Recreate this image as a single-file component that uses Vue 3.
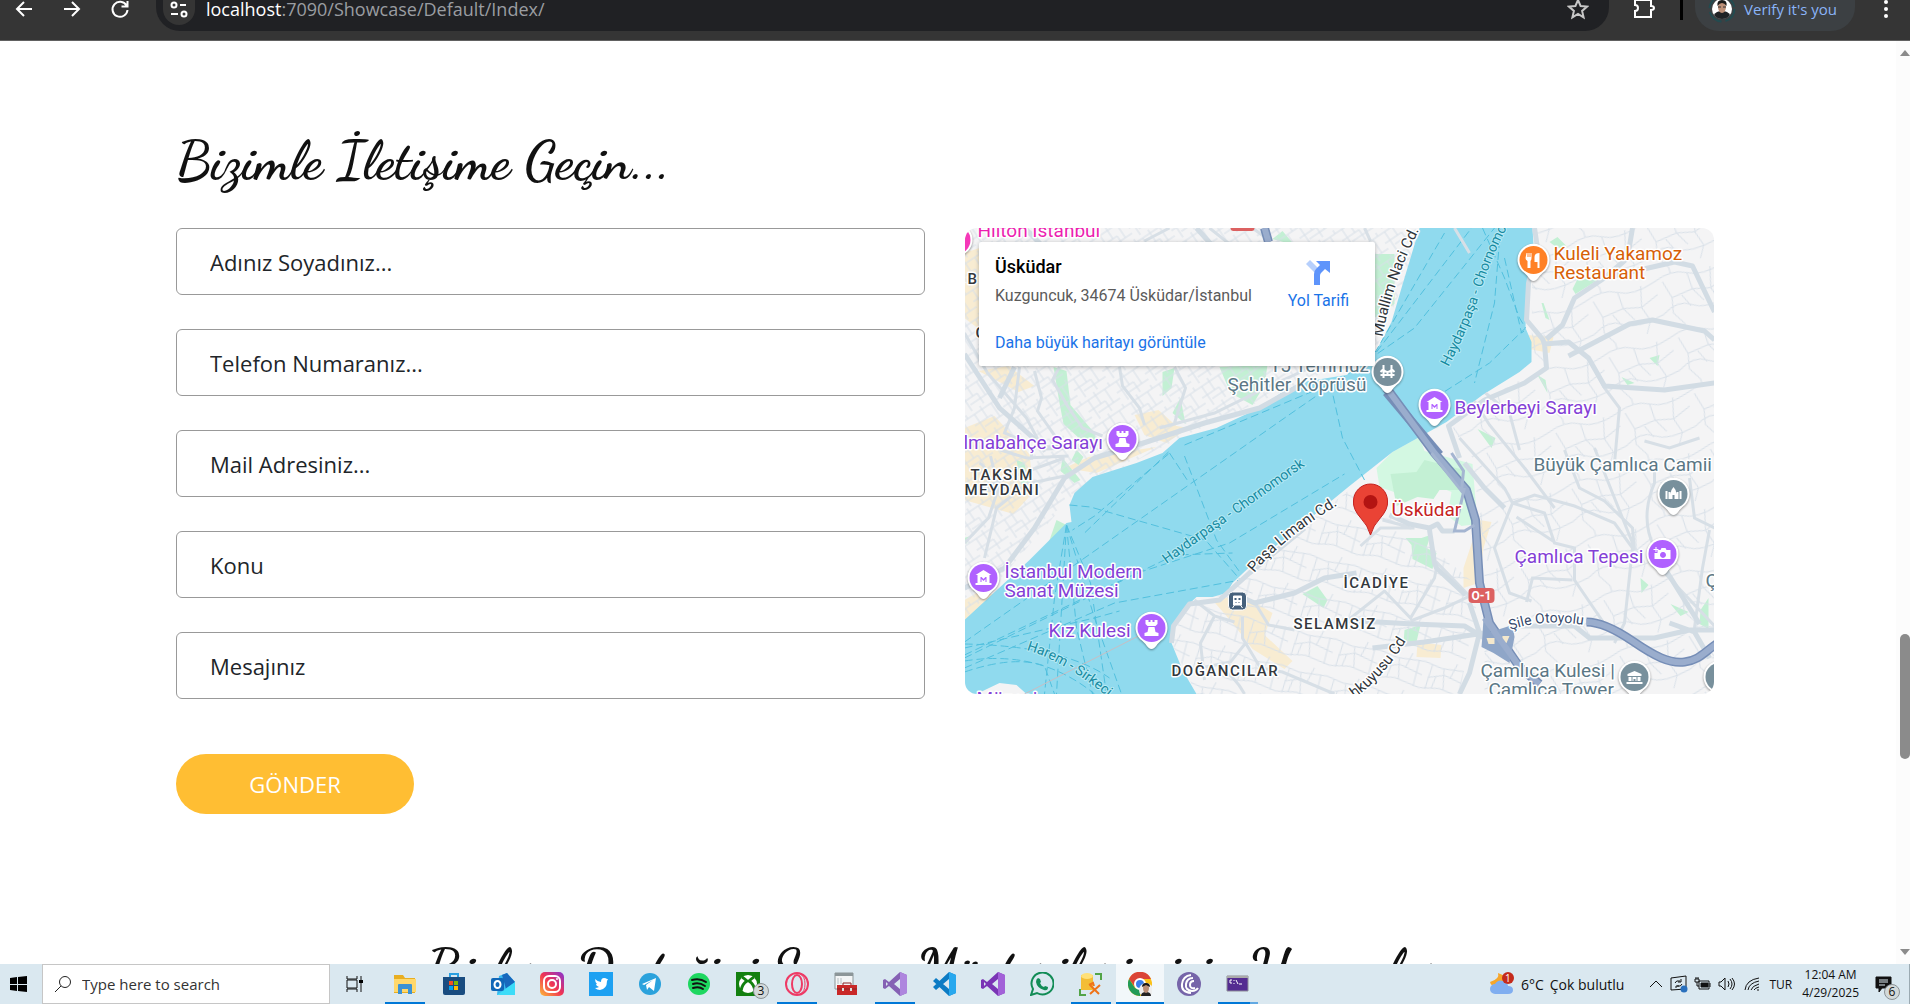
<script setup>
import { ref } from 'vue'

const fields = [
  { id: 'name', type: 'text', label: 'Adınız Soyadınız...' },
  { id: 'phone', type: 'tel', label: 'Telefon Numaranız...' },
  { id: 'mail', type: 'email', label: 'Mail Adresiniz...' },
  { id: 'subject', type: 'text', label: 'Konu' },
  { id: 'message', type: 'text', label: 'Mesajınız' },
]
const form = ref({ name: '', phone: '', mail: '', subject: '', message: '' })

const pins = [
  { x: -8, y: 12, color: '#f538b8', kind: 'dot' },
  { x: 158, y: 211, color: '#b061ff', kind: 'tower' },
  { x: 187, y: 400, color: '#b061ff', kind: 'tower' },
  { x: 19, y: 350, color: '#b061ff', kind: 'museum' },
  { x: 470, y: 177, color: '#b061ff', kind: 'museum' },
  { x: 423, y: 144, color: '#78909c', kind: 'bridge' },
  { x: 569, y: 32, color: '#ff8126', kind: 'food' },
  { x: 709, y: 266, color: '#78909c', kind: 'mosque' },
  { x: 698, y: 326, color: '#b061ff', kind: 'camera' },
  { x: 670, y: 449, color: '#78909c', kind: 'bank' },
  { x: 755, y: 449, color: '#78909c', kind: 'dot' },
]

const labels = [
  { x: 13, y: 9, t: 'Hilton İstanbul', c: 'pink' },
  { x: 3, y: 56, t: 'B', c: 'area' },
  { x: 11, y: 110, t: 'G', c: 'area' },
  { x: 305, y: 144, t: '15 Temmuz', c: 'slate' },
  { x: 263, y: 163, t: 'Şehitler Köprüsü', c: 'slate' },
  { x: -1, y: 221, t: 'lmabahçe Sarayı', c: 'violet' },
  { x: 6, y: 252, t: 'TAKSİM', c: 'area' },
  { x: 0, y: 267, t: 'MEYDANI', c: 'area' },
  { x: 40, y: 350, t: 'İstanbul Modern', c: 'violet' },
  { x: 40, y: 369, t: 'Sanat Müzesi', c: 'violet' },
  { x: 84, y: 409, t: 'Kız Kulesi', c: 'violet' },
  { x: 12, y: 477, t: 'Müzesi', c: 'violet' },
  { x: 207, y: 448, t: 'DOĞANCILAR', c: 'area' },
  { x: 379, y: 360, t: 'İCADİYE', c: 'area' },
  { x: 329, y: 401, t: 'SELAMSIZ', c: 'area' },
  { x: 427, y: 288, t: 'Üsküdar', c: 'red' },
  { x: 550, y: 335, t: 'Çamlıca Tepesi', c: 'violet' },
  { x: 569, y: 243, t: 'Büyük Çamlıca Camii', c: 'slate' },
  { x: 516, y: 449, t: 'Çamlıca Kulesi |', c: 'slate' },
  { x: 524, y: 468, t: 'Çamlıca Tower', c: 'slate' },
  { x: 741, y: 359, t: 'Ç', c: 'slate' },
  { x: 589, y: 32, t: 'Kuleli Yakamoz', c: 'orange' },
  { x: 589, y: 51, t: 'Restaurant', c: 'orange' },
  { x: 490, y: 186, t: 'Beylerbeyi Sarayı', c: 'violet' },
]

const curved = [
  { id: 'c1', d: 'M202 336L350 231', t: 'Haydarpaşa - Chornomorsk', c: 'sea' },
  { id: 'c2', d: 'M484 139Q506 97 518 57Q530 22 545 -5L565 -50', t: 'Haydarpaşa - Chornomorsk', c: 'sea' },
  { id: 'c3', d: 'M62 422Q104 434 156 480', t: 'Harem - Sirkeci', c: 'sea' },
  { id: 'c4', d: 'M418 109Q428 50 462 -12', t: 'Muallim Naci Cd.', c: 'road' },
  { id: 'c5', d: 'M290 345Q320 308 382 272', t: 'Paşa Limanı Cd.', c: 'road' },
  { id: 'c6', d: 'M390 470Q424 446 449 400', t: 'hkuyusu Cd', c: 'road' },
  { id: 'c7', d: 'M546 402Q584 388 634 400', t: 'Şile Otoyolu', c: 'motorway' },
]

const apps = [
  { n: 'File Explorer', k: 'explorer', open: true },
  { n: 'Microsoft Store', k: 'store' },
  { n: 'Outlook', k: 'outlook' },
  { n: 'Instagram', k: 'instagram' },
  { n: 'Twitter', k: 'twitter' },
  { n: 'Telegram', k: 'telegram' },
  { n: 'Spotify', k: 'spotify' },
  { n: 'Xbox', k: 'xbox' },
  { n: 'Opera GX', k: 'opera', open: true },
  { n: 'Toolbox', k: 'toolbox' },
  { n: 'Visual Studio 2022', k: 'vs', open: true },
  { n: 'Visual Studio Code', k: 'vscode' },
  { n: 'Visual Studio', k: 'vs2' },
  { n: 'WhatsApp', k: 'whatsapp' },
  { n: 'SQL Server Management Studio', k: 'ssms', open: true },
  { n: 'Chrome', k: 'chrome', open: true, active: true },
  { n: 'BitTorrent', k: 'bittorrent' },
  { n: 'Command Prompt', k: 'cmd', open: true, multi: true },
]
</script>

<template>
  <div class="screen">
    <header class="toolbar">
      <button class="nav" aria-label="Back"><svg width="20" height="20" viewBox="0 0 20 20"><path d="M18 10H3M10 3l-7 7 7 7" /></svg></button>
      <button class="nav" aria-label="Forward"><svg width="20" height="20" viewBox="0 0 20 20"><path d="M2 10h15M10 3l7 7-7 7" /></svg></button>
      <button class="nav" aria-label="Reload"><svg width="20" height="20" viewBox="0 0 20 20"><path d="M16.500 6.500A7.500 7.500 0 1 0 17.500 11M17.500 2v5.500h-6" /></svg></button>
      <div class="omnibox">
        <button class="site" aria-label="Site information"><svg width="20" height="20" viewBox="0 0 20 20"><circle cx="5" cy="5" r="2.500" /><path d="M11 5h6M2 14h7" /><circle cx="15" cy="14" r="2.500" /></svg></button>
        <span class="url"><b>localhost</b>:7090/Showcase/Default/Index/</span>
        <button class="star" aria-label="Bookmark"><svg width="22" height="22" viewBox="0 0 22 22"><path d="M11 2l2.600 6 6.400.6-4.900 4.300 1.500 6.400-5.600-3.400-5.600 3.400 1.500-6.400L2 8.600 8.400 8z" /></svg></button>
      </div>
      <button class="ext" aria-label="Extensions"><svg width="24" height="24" viewBox="0 0 24 24"><path d="M3 3h16v6q3 0 3 2t-3 2v7H3v-6q3 0 3-3t-3-3z" /></svg></button>
      <span class="divider"></span>
      <button class="profile">
        <svg width="28" height="28" viewBox="0 0 28 28"><circle cx="14" cy="14" r="12.500" fill="none" stroke="#224b50" stroke-width="2" stroke-dasharray="16 4" /><circle cx="14" cy="14" r="10" fill="#fff" /><path d="M6 20q2-4 8-4t8 4q-3 4-8 4t-8-4" fill="#202326" /><ellipse cx="14" cy="12" rx="4" ry="6" fill="#bd9078" /><path d="M9.500 11q-1-6 4.500-6t4.500 6q-2-3-4.500-3t-4.500 3" fill="#191919" /><path d="M10 12h3m2 0h3" stroke="#333" /></svg>
        Verify it's you
      </button>
      <button class="more" aria-label="Menu"><svg width="6" height="22" viewBox="0 0 6 22"><circle cx="3" cy="4" r="2" /><circle cx="3" cy="11" r="2" /><circle cx="3" cy="18" r="2" /></svg></button>
    </header>

    <div class="viewport">
      <main class="page">
        <section class="contact">
          <h2>Bizimle İletişime Geçin...</h2>
          <div class="columns">
            <form @submit.prevent>
              <input v-for="f in fields" :key="f.id" v-model="form[f.id]" :type="f.type" :name="f.id" :placeholder="f.label" :aria-label="f.label" />
              <button class="send" type="submit">GÖNDER</button>
            </form>
            <div class="map">
              <svg class="canvas" viewBox="0 0 750 466" preserveAspectRatio="xMidYMid slice" aria-label="Üsküdar">
                <defs>
                  <pattern id="gridA" width="34" height="26" patternUnits="userSpaceOnUse" patternTransform="rotate(-34)"><path d="M0 4h34M0 14h20M8 20h26M6 4v22M15 0v14M26 4v16M20 14v12M32 0v4" /></pattern>
                  <pattern id="gridB" width="46" height="38" patternUnits="userSpaceOnUse" patternTransform="rotate(14)"><path d="M0 5l18 3 28-3M6 20l16-6 24 5M0 32l20-4 26 4M8 6l-2 26M20 8l4 20M32 0l-4 16M40 5v27M14 17l-2 13" /></pattern>
                  <pattern id="gridC" width="72" height="58" patternUnits="userSpaceOnUse" patternTransform="rotate(-16)"><path d="M0 10q20-8 34 0t38 0M8 12l5 18 22-3 8 14M34 10l1 17 18 4 19-8M0 44q18-11 30-2t42 2M13 30l-3 15 8 13M53 31l5 15-7 12M58 10l-5 21M23 30l6 13M18 6V0" /></pattern>
                  <path v-for="c in curved" :id="c.id" :key="c.id" :d="c.d" />
                </defs>
                <rect width="750" height="466" fill="#f4f4f5" />
                <g fill="#f8ecd2">
                  <path d="M0 25l18-6 4 35H0zM0 55h25l20 50-20 4L0 90zM0 200l30-12 35 38 4 38-20 22L0 272zM170 187l24-5 18 16 12 2-22 15-22-8zM14 143l30-5 26 20-16 6zM100 240l24-11 68-10-60 26zM248 372l30-5 30 18-8 22 28 26-8 8-32-20-20-26zM0 372l14-8 20 3-20 26H0zM562 107l27 2-4 16-20-4zM515 292l12 2-8 26-5 35-15 5 0-20 10-30zM453 414l24 3-1 13-24-1z" />
                </g>
                <g fill="#c3f0d4">
                  <path d="M89 139l13 4 4 34 24 28 3 13-12-2-22-20-4-21zM198 144l12-4-3 20-9 8zM255 139l48-2-3 20-12 20-22-12zM208 185l8-15 5 26zM410 26h20v50l-20 14zM52 232l8 3 4 20-7 2zM98 230l18 22-6 3-14-12zM112 222l7 7-5 8-7-5zM92 292l10 5-18 18zM308 11l10-8 12 14zM585 14l8-5 10 10-10 1zM608 61l5-10h22l-24 15zM577 75h2l6 17-4-2zM685 130l10-3-2 11zM573 147l8 5 2 13zM657 149l13 6-7 2zM513 201l18 9-4 10zM457 310l9-3-4 13 10 5-4 16-20-10-1-14-6-7zM338 366l15-8 10 14-4 8zM440 402l16-5-5 21-12-3zM676 350l8 7-7 8zM706 376l18 8-8 4zM736 382l8-12v31l-9-5zM0 310l6-2-4 8z" />
                </g>
                <path d="M428 224l27-15 5 14 48 13 5 60-16 2-14-10 4-24-22-9-18 15-32-11-3-19z" fill="#d3f8e2" />
                <path d="M426 246l26-2 8-12 40 10-5 20-20 0-6 9-16-2-21 9z" fill="#c3f0d4" />
                <g>
                  <path d="M0 0h455L437 60 412 120 338 154 215 210 110 265 0 392z" fill="url(#gridA)" />
                  <path d="M285 339L385 262l60 38 70 60-20 106H232L207 415l11-33 50-20z" fill="url(#gridB)" />
                  <path d="M568 0h182v466H520V330l-12-100-20-30 79-60z" fill="url(#gridC)" />
                </g>
                <path class="water" d="M0 392L65 332 102 295 107 294 105 277 110 265 128 249 172 235 198 225 215 210 252 200 295 180 318 164 338 154 382 147 408 130 427 94 437 60 455 0H568L569 17 562 64 561 100 567 114V134L555 144 518 167 482 194 455 209 428 224 385 258 335 299 285 339 268 355 262 365 248 369 232 369 218 382 208 399 207 415 218 442 232 466H62L52 457 35 455 12 466H0z" />
                <g class="ferry">
                  <path d="M0 414L110 337 320 190 450 100 530 0M0 427L170 346 265 315 380 246M0 430L210 327 268 325M0 440L150 375 276 352M0 420L130 390 155 383M102 297L90 370 80 466M102 297L112 400 128 466M102 297L130 390 157 466M102 297L92 466M102 297L126 355 142 466M105 277L126 279 241 312 276 352M204 226L130 288 108 302M220 228L252 312 276 345M205 225L224 254M204 224L120 305M220 217L380 150M390 155L412 122 480 5M412 124L507 0M518 0L540 50 555 90 561 100 525 135 470 170M536 0L530 75 510 155M540 30L557 105 561 102M0 416Q100 418 145 450M0 433Q75 421 130 466M0 444Q50 427 80 438L90 466M366 156L378 210 400 252" />
                </g>
                <path d="M174 408L60 466" stroke="#c7bec3" fill="none" />
                <g class="minor">
                  <path d="M0 105L23 145 62 190 80 224M55 139L50 180 40 205 57 212M95 139L88 152 103 178 118 200 138 208M70 143L77 170 73 183 92 210M155 139L158 158 175 180 180 197M210 139L221 160 210 195M180 13L205 0M245 0L280 28M288 0L303 11M400 0L406 13M195 200L250 185 305 158 350 138" />
                  <path d="M0 315L24 290 34 260 26 228M20 330L32 280 62 256 100 248M36 222L62 230 104 228M67 222V232M0 265L30 255 100 230M15 235Q25 240 25 264M230 372L250 388 270 394M250 388L236 415 240 452M278 389V410L296 440 318 444 370 466M290 374L304 397 330 402M252 436Q272 450 280 466M236 440L266 434 282 414M396 318L416 300 450 300M418 292L445 299M380 395L420 363 446 390 470 350 473 335 505 368 480 380 446 393" />
                  <path d="M490 0L505 25M521 165L545 185 555 222M510 173L525 197 560 240M495 210L540 260 548 275 530 320 545 365 567 373M548 275L580 285 590 315 610 320 610 352 640 396M548 275L570 267 610 278 650 295 668 320 660 395 650 415M562 374L568 350 608 352M552 289L590 314M630 220L670 320M600 222L615 260 640 273 668 300 670 322M560 240L590 280M690 320L700 345 750 398M690 320Q675 290 690 255Q690 240 690 235M725 250L730 290 750 300M735 210L705 220 680 213M632 145L640 160 655 180 650 235M745 302L738 340 730 400" />
                </g>
                <g class="major">
                  <path d="M0 360L40 340 70 300 100 250 130 230 182 214 240 195 295 180 340 155M207 415L209 398 225 376 255 372 285 345 340 300M0 126L35 180 80 220 130 218M50 139L35 170M232 0L250 20 280 30M60 0L80 20M270 366L290 375 330 365 360 350 392 345" />
                  <path d="M570 0L573 20 564 55 562 92 578 111 580 116 582 140 560 155 520 172 484 198 495 230M580 116L604 114 624 130 640 158 700 162 750 155M604 128L665 96 688 92 740 103 750 112M582 111L598 97 610 70 640 50 710 34 728 38 750 84M668 0L663 30 640 50M425 287L445 296 465 300 473 296 478 303 490 303M465 302L470 335 472 340 501 367M378 392L448 396 500 398 520 410 555 398 610 398 625 410 690 410 725 402 750 402M408 420L460 414 520 405M505 375L515 405 505 445 495 466M500 235L520 260 540 280M705 395L730 404 745 430M690 324L735 396" />
                </g>
                <path class="bridge" d="M422 164L475 227" />
                <g class="highway-edge"><path d="M422 160L470 225 502 262 511 292 515 355 525 395 555 439 575 456M300 0L304 14M622 394Q640 394 668 413C690 428 705 436 720 434S740 424 752 416" /></g>
                <g class="highway"><path d="M422 160L470 225 502 262 511 292 515 355 525 395 555 439 575 456M300 0L304 14M622 394Q640 394 668 413C690 428 705 436 720 434S740 424 752 416" /></g>
                <path d="M519 390l7 14 22-7 2 12-5 26-16-10-12-6 1-12z" fill="#8fa6c8" />
                <path d="M522 410l8 0 0 6-6 0zM538 408h7l-3 7h-5z" fill="#f4e8cc" />
                <path d="M520 390L556 440" stroke="#9aadcd" stroke-width="6" />
                <path d="M467 225l30 38 2-20-12-18M500 260l-10 43 10 0 10-6" fill="none" stroke="#a4b5d1" stroke-width="3" />
                <g v-for="p in pins" :key="p.x + '-' + p.y" class="pin" :transform="`translate(${p.x} ${p.y})`">
                  <path class="drop" d="M0 21Q-3 21-6 16L-9 13A16 16 0 1 1 9 13L6 16Q3 21 0 21z" />
                  <circle r="14" :fill="p.color" />
                  <path v-if="p.kind === 'tower'" fill="#fff" d="M-6-8h3v2h2v-2h2v2h2v-2h3v4l-2 2H-4l-2-2zM-3-1H3L4 4l3 1v3H-7V5l3-1z" />
                  <path v-else-if="p.kind === 'museum'" fill="#fff" fill-rule="evenodd" d="M-8-3L0-8l8 5H6V5h2v2H-8V5h2v-8zM-3-1v5h1V1l2 2 2-2v3h1v-5H2L0 1l-2-2z" />
                  <path v-else-if="p.kind === 'bridge'" fill="none" stroke="#fff" stroke-width="2" d="M-4-7V6M4-7V6M-7 3H7M-4-2Q0 2 4-2M-7 0l3-3M7 0L4-3M0-1V3" />
                  <path v-else-if="p.kind === 'food'" fill="#fff" d="M-7-7h1v4h1v-4h1v4h1v-4h1v5q0 2-1 3v7h-3V1q-2-1-2-3zM1-3q0-4 5-4V8H4V2H1z" />
                  <path v-else-if="p.kind === 'mosque'" fill="#fff" d="M-8-3h2v8h-2zm14 0h2v8H6zM-5-2h2v7h-2zm8 0h2v7H3zM-3 0Q-3-4 0-7q3 3 3 7v5H1V1h-2v4h-2z" />
                  <path v-else-if="p.kind === 'camera'" fill="#fff" fill-rule="evenodd" d="M-2-4l1-2h4l1 2h4v9H-8v-6h3v-3zM0-2a3 3 0 1 0 1 0zM-7-7h1v2h2v1h-2v2h-1v-2h-2v-1h2z" />
                  <path v-else-if="p.kind === 'bank'" fill="#fff" d="M-7-3L0-6l7 3v2H-7zM-6 0h3v4h-3zm4 0h4v4h-1V2h-2v2h-1zM3 0h3v4H3zM-8 5H8v2H-8z" />
                  <circle v-else r="4" fill="#fff" />
                </g>
                <rect x="264" y="364" width="18" height="18" rx="4" fill="#46617c" stroke="#fff" />
                <path d="M269 368h8v9h-8zM270 377l-2 3m8-3l2 3" fill="#fff" stroke="#fff" /><path d="M270 370h2v2h-2zm4 0h2v2h-2zm-3 4h1v1h-1zm3 0h1v1h-1z" fill="#46617c" />
                <rect x="504" y="360" width="26" height="15" rx="4" fill="#dc6161" />
                <text x="517" y="372" class="shield">O-1</text>
                <rect x="266" y="-8" width="24" height="11" rx="3" fill="#dc6161" />
                <text v-for="l in labels" :key="l.t + l.y" :x="l.x" :y="l.y" class="lbl" :class="l.c">{{ l.t }}</text>
                <text v-for="c in curved" :key="c.id" class="lbl" :class="c.c"><textPath :href="'#' + c.id">{{ c.t }}</textPath></text>
                <path d="M406 307Q403 297 397 291Q388 281 389 273A17 17 0 0 1 423 273Q424 281 415 291Q409 297 406 307z" fill="#ea4335" stroke="#c5221f" />
                <circle cx="406" cy="274" r="7" fill="#b31412" />
              </svg>
              <div class="card">
                <div class="place">
                  <strong>Üsküdar</strong>
                  <span>Kuzguncuk, 34674 Üsküdar/İstanbul</span>
                  <a href="#">Daha büyük haritayı görüntüle</a>
                </div>
                <a class="route" href="#"><svg width="26" height="26" viewBox="0 0 26 26"><path d="M1 4l4-4 9 9-4 4z" fill="#b6cffc" /><path d="M9 25V14q0-3 2-5l4-4-4-4h14v12l-5-4-4 4q-1 1-1 3v9z" fill="#5e94fb" /></svg>Yol Tarifi</a>
              </div>
            </div>
          </div>
        </section>
        <section class="reviews"><h2>Bizlere Desteğini Sunan Müşterilerimizin Yorumları</h2></section>
      </main>
      <div class="scrollbar"><i class="up"></i><i class="thumb"></i><i class="down"></i></div>
    </div>

    <footer class="taskbar">
      <button class="start" aria-label="Start"><svg width="17" height="16" viewBox="0 0 17 16"><path d="M0 2l7-1v7H0zM8 1l9-1v8H8zM0 9h7v6l-7-1zM8 9h9v7l-9-1z" /></svg></button>
      <div class="search"><svg width="18" height="18" viewBox="0 0 18 18"><circle cx="11" cy="7" r="5.500" /><path d="M7 11l-6 6" /></svg><input type="text" placeholder="Type here to search" aria-label="Type here to search" /></div>
      <button class="start view" aria-label="Task View"><svg width="18" height="18" viewBox="0 0 18 18"><path d="M1 1v3h10V1M1 5h10v8H1zM1 17v-3h10v3M15 1v16" fill="none" stroke="#111" /><path d="M13 5h4v3h-4z" /></svg></button>
      <nav class="apps">
        <button v-for="a in apps" :key="a.k" :aria-label="a.n" :class="{ open: a.open, active: a.active, multi: a.multi }">
          <svg width="24" height="24" viewBox="0 0 24 24">
            <g v-if="a.k === 'explorer'"><path d="M1 3h9l2 3h10v15H1z" fill="#e8ae22" /><path d="M1 7h22v13H1z" fill="#ffd86b" /><path d="M5 13q0-1 1-1h12q1 0 1 1v9h-4v-5H9v5H5z" fill="#3b92d4" /></g>
            <g v-else-if="a.k === 'store'"><path d="M8 6V2h8v4" fill="none" stroke="#2aa0e2" stroke-width="2" /><path d="M1 5h22v16q0 2-2 2H3q-2 0-2-2z" fill="#194c80" /><path d="M7 9h4v4H7z" fill="#f25022" /><path d="M12 9h4v4h-4z" fill="#7fba00" /><path d="M7 14h4v4H7z" fill="#00a4ef" /><path d="M12 14h4v4h-4z" fill="#ffb900" /></g>
            <g v-else-if="a.k === 'outlook'"><path d="M8 4l8-3 8 9v13H6z" fill="#38b7ef" /><path d="M11 3l5-2 8 9-9 7z" fill="#1768bd" /><path d="M6 23l18-13v13z" fill="#3ddcf8" /><rect y="6" width="13" height="13" rx="2" fill="#1067b8" /><ellipse cx="6.500" cy="12.500" rx="3" ry="3.500" fill="none" stroke="#fff" stroke-width="2" /></g>
            <g v-else-if="a.k === 'instagram'"><linearGradient id="ig" x1="0" y1="1" x2="1" y2="0"><stop stop-color="#fdbb38" /><stop offset=".5" stop-color="#f03354" /><stop offset="1" stop-color="#8634d2" /></linearGradient><rect width="24" height="24" rx="5" fill="url(#ig)" /><rect x="4" y="4" width="16" height="16" rx="5" fill="none" stroke="#fff" stroke-width="2" /><circle cx="12" cy="12" r="4" fill="none" stroke="#fff" stroke-width="2" /><circle cx="17" cy="7" r="1" fill="#fff" /></g>
            <g v-else-if="a.k === 'twitter'"><path d="M0 0h24v24H0z" fill="#1da1f2" /><path d="M6 7q3 3 6 3 0-4 3-4 2 0 3 1l1 0-1 2q0 8-7 9-3 0-5-2 2 0 4-1-3-1-3-3h1Q6 10 6 7" fill="#fff" /></g>
            <g v-else-if="a.k === 'telegram'"><circle cx="12" cy="12" r="11" fill="#2ba2dc" /><path d="M4 12l14-6-2 13-5-4-2 3-1-5 7-5-9 5z" fill="#fff" /></g>
            <g v-else-if="a.k === 'spotify'"><circle cx="12" cy="12" r="11" fill="#1ed760" /><path d="M5 8q8-2 14 2M6 12q6-2 12 2M6 16q6-2 10 1" fill="none" stroke="#111" stroke-width="2" stroke-linecap="round" /></g>
            <g v-else-if="a.k === 'xbox'"><path d="M0 0h24v24H0z" fill="#138010" /><circle cx="12" cy="12" r="9" fill="#fff" /><path d="M5 19q1-7 6-10Q8 6 6 5M19 19q-1-7-6-10 3-3 5-4" fill="none" stroke="#138010" stroke-width="3" /></g>
            <g v-else-if="a.k === 'opera'" fill="none" stroke="#ee3a65" stroke-width="2"><circle cx="12" cy="12" r="11" /><ellipse cx="12" cy="12" rx="5" ry="9" /><path d="M15 2q5 2 5 10t-5 10" stroke-width="1" /></g>
            <g v-else-if="a.k === 'toolbox'"><path d="M1 1h18v16H1z" fill="#f3f5f6" stroke="#8c9699" /><path d="M1 1h18v3H1z" fill="#8c9699" /><path d="M4 6v6m3-6v6" stroke="#b7c0c4" /><path d="M3 13h20v10H3z" fill="#c92828" /><path d="M9 13v-2h8v2M3 17h20" stroke="#8a2224" stroke-width="1" fill="none" /><path d="M8 16h2v3H8zm8 0h2v3h-2z" fill="#ddd" /></g>
            <g v-else-if="a.k === 'vs' || a.k === 'vs2'"><path d="M17 0l7 3v18l-7 3-11-10-4 3-2-1V8l2-1 4 3zM17 7l-6 5 6 5zM3 10v4l2-2z" fill-rule="evenodd" :fill="a.k === 'vs' ? '#8561b4' : '#7a35b5'" /><path d="M17 0l7 3v18l-7 3z" :fill="a.k === 'vs' ? '#ae86de' : '#a261d8'" /></g>
            <g v-else-if="a.k === 'vscode'"><path d="M17 0l7 3v18l-7 3L1 9l3-3 13 11V7L4 18l-3-3z" fill="#0b7bc4" /><path d="M17 0l7 3v18l-7 3z" fill="#28a8ee" /></g>
            <g v-else-if="a.k === 'whatsapp'"><path d="M1 23l2-6A11 11 0 1 1 7 21z" fill="none" stroke="#128c56" stroke-width="2" /><path d="M8 6l2 1 1 3-1 1q1 3 4 4l1-1 3 1q0 4-4 3-7-2-8-8 0-3 2-4" fill="#128c56" /></g>
            <g v-else-if="a.k === 'ssms'"><path d="M2 3v15h12V3z" fill="#f3bd36" /><ellipse cx="8" cy="4" rx="6" ry="3" fill="#ffe078" /><path d="M16 2h6v6M1 17v6h6" fill="none" stroke="#52a447" stroke-width="2" /><path d="M11 13l9 9M21 13l-10 9M10 13l4-2 1 3" fill="none" stroke="#ef7318" stroke-width="2" /></g>
            <g v-else-if="a.k === 'chrome'"><circle cx="12" cy="12" r="12" fill="#fbc116" /><path d="M1 7A12 12 0 0 1 23 7H12l-5 8z" fill="#db4437" /><path d="M1 7l6 9 6 2-1 6A12 12 0 0 1 1 7" fill="#229b58" /><circle cx="12" cy="12" r="5" fill="#3b7fea" stroke="#fff" stroke-width="2" /><circle cx="18" cy="18" r="7" fill="#eee" /><path d="M13 24q0-4 5-4t5 4" fill="#222" /><ellipse cx="18" cy="16" rx="3" ry="5" fill="#b98e76" /><path d="M14 15q0-4 4-4t4 4l-4-2z" fill="#181818" /></g>
            <g v-else-if="a.k === 'bittorrent'"><circle cx="12" cy="12" r="12" fill="#7665a9" /><path d="M14 3Q6 4 5 12t9 9M16 6q-6 0-7 6t6 7q4 0 6-3M17 9q-4 0-4 4t5 3" fill="none" stroke="#fff" stroke-width="2" /></g>
            <g v-else><path d="M1 4h21v15H1z" fill="#542c91" stroke="#8c8c96" /><path d="M1 4h21v2H1z" fill="#aaa" /><path d="M6 8H4v3h2m2-3v1m0 2v1m2-4l2 4m1 0h3" fill="none" stroke="#fff" /></g>
          </svg>
          <em v-if="a.k === 'xbox'" class="badge">3</em>
        </button>
      </nav>
      <div class="tray">
        <button class="weather"><svg width="26" height="24" viewBox="0 0 26 24"><path d="M9 1q2 6-8 9 1 5 7 4l8-3V4z" fill="#f6a62b" /><path d="M6 22a5 5 0 0 1 0-10q3-5 8-3t5 5q5 0 5 4t-5 4z" fill="#80aef0" /><circle cx="19" cy="6" r="6" fill="#c42b1c" /></svg><em class="alert">1</em><span>6°C</span><span>Çok bulutlu</span></button>
        <button aria-label="Show hidden icons"><svg width="16" height="16" viewBox="0 0 16 16"><path d="M2 11l6-6 6 6" /></svg></button>
        <button aria-label="Sync"><svg width="18" height="18" viewBox="0 0 18 18"><path d="M1 3l15-2v13l-15 1zM5 8q1-3 5-2M11 4v3H8M12 9q-1 3-5 2M6 13v-2h3" /><circle cx="14" cy="14" r="3.500" fill="#2a70bd" stroke="none" /></svg></button>
        <button aria-label="Battery"><svg width="18" height="16" viewBox="0 0 18 16"><path d="M5 5h10v8H5zM16 7v4M1 3h4v3H1zM2 1v2m2-2v2M3 6v4h2" /><path d="M7 7h7v4H7z" fill="#111" /></svg></button>
        <button aria-label="Volume"><svg width="18" height="16" viewBox="0 0 18 16"><path d="M1 6h2l4-4v12l-4-4H1zM10 5q2 3 0 6M12 3q4 5 0 10M14 2q5 6 0 12" /></svg></button>
        <button aria-label="Network"><svg width="18" height="16" viewBox="0 0 18 16"><path d="M3 14Q4 4 17 2M6 14q1-7 11-9M9 14q1-4 8-6M12 14q1-2 5-3M15 14h2" /></svg></button>
        <button class="lang">TUR</button>
        <button class="clock"><span>12:04 AM</span><span>4/29/2025</span></button>
        <button class="notes" aria-label="Notifications"><svg width="18" height="17" viewBox="0 0 18 17"><path d="M1 1h15v11H7l-3 4v-4H1z" fill="#111" /><path d="M4 4h9M4 6h9M4 9h6" stroke="#dce9f0" /></svg><em class="badge">6</em></button>
      </div>
    </footer>
  </div>
</template>

<style>
body { margin: 0; background: #fff; }
</style>

<style scoped>
* { box-sizing: border-box; }
button { border: 0; padding: 0; background: none; font: inherit; color: inherit; cursor: pointer; }
svg { display: block; flex: none; }
a { text-decoration: none; }
em { font-style: normal; }
.screen { height: 100vh; display: flex; flex-direction: column; overflow: hidden; font-family: "Open Sans", sans-serif; }

.toolbar { flex: none; height: 41px; display: flex; align-items: flex-start; background: #353535; border-bottom: 1px solid #616161; color: #fff; font-size: 17px; padding: 0 14px; overflow: hidden; }
.toolbar svg { fill: none; stroke: #fff; stroke-width: 2; }
.nav { height: 18px; width: 20px; margin-right: 28px; display: flex; align-items: center; }
.omnibox { flex: 1; height: 31px; margin-left: -2px; background: #202124; border-radius: 0 0 24px 24px; display: flex; align-items: flex-start; padding: 0 20px 0 7px; }
.site { width: 32px; height: 25px; background: #353535; border-radius: 0 0 16px 16px; padding: 0 6px; display: flex; align-items: flex-start; }
.url { flex: 1; height: 18px; line-height: 18px; margin-left: 11px; font-size: 18px; color: #9a9da1; }
.url b { color: #fff; font-weight: 400; }
.star { height: 18px; display: flex; align-items: center; }
.star svg { stroke: #c7c7c7; }
.ext { height: 18px; display: flex; align-items: center; margin-left: 23px; }
.divider { width: 3px; height: 20px; background: #000; margin-left: 24px; }
.profile { height: 31px; margin: 0 28px 0 12px; padding: 0 18px 13px 13px; border-radius: 0 0 24px 24px; background: #3c4043; color: #8ab4f8; font-size: 15px; display: flex; align-items: center; gap: 8px; }
.profile svg { stroke: none; stroke-width: 1; }
.more { height: 18px; display: flex; align-items: center; margin-right: 7px; }
.more svg { fill: #fff; stroke: none; }

.viewport { flex: 1; min-height: 0; display: flex; overflow: hidden; background: #fff; }
.page { flex: 1; min-width: 0; overflow: hidden; }
h2 { margin: 0; font: 700 54px/60px "Dancing Script", cursive; color: #111; white-space: nowrap; }
.contact { padding: 90px 182px 0 176px; }
.contact h2 { margin-bottom: 37px; }
.columns { display: grid; grid-template-columns: 1fr 1fr; gap: 40px; align-items: start; }
form { display: flex; flex-direction: column; gap: 34px; }
form input { width: 100%; height: 67px; border: 1px solid #999; border-radius: 6px; padding: 0 33px; font: 400 22px/30px "Open Sans", sans-serif; color: #212529; background: #fff; }
form input::placeholder { color: #212529; opacity: 1; }
.send { align-self: flex-start; width: 238px; height: 60px; margin-top: 21px; border-radius: 30px; background: #ffbe33; color: #fff; font-size: 22px; }
.reviews { padding: 125px 12px 0 0; text-align: center; }

.map { position: relative; height: 466px; border-radius: 12px; overflow: hidden; }
.canvas { width: 100%; height: 100%; font-family: Roboto, sans-serif; }
pattern path, .minor path { fill: none; stroke: #d8e0e8; stroke-width: 1; }
.minor path { stroke-width: 3; stroke: #d7dfe6; }
.major path { fill: none; stroke: #d2dce4; stroke-width: 5; stroke-linejoin: round; }
.water { fill: #90daee; }
.ferry path { fill: none; stroke: #52c0de; stroke-width: 1; stroke-dasharray: 8 4; }
.highway-edge path, .bridge { fill: none; stroke: #768eb7; stroke-width: 9; stroke-linejoin: round; }
.highway path { fill: none; stroke: #9aadcd; stroke-width: 6; stroke-linejoin: round; }
.drop { fill: #fff; filter: drop-shadow(0 1px 1px #0006); }
.lbl { font-size: 19px; paint-order: stroke; stroke: #fff; stroke-width: 3px; stroke-linejoin: round; }
.violet { fill: #8440d6; }
.pink { fill: #ec1eb0; }
.slate { fill: #5b7785; }
.orange { fill: #d75f07; }
.red { fill: #c5221f; }
.area { fill: #33383d; font-size: 15px; font-weight: 500; letter-spacing: 0.1em; }
.sea { fill: #168aa1; font-size: 14px; stroke: #b8eaf5; stroke-width: 2px; }
.road { fill: #30363b; font-size: 15px; }
.motorway { fill: #35496b; font-size: 14px; }
.shield { fill: #fff; font-size: 12px; font-weight: 700; text-anchor: middle; }
.card { position: absolute; top: 14px; left: 14px; width: 396px; height: 124px; display: flex; justify-content: space-between; padding: 15px 26px 13px 16px; background: #fff; border-radius: 2px; box-shadow: 0 1px 4px #0004; font: 400 16px/20px Roboto, sans-serif; }
.card a { color: #1a73e8; }
.place { display: flex; flex-direction: column; white-space: nowrap; }
.place strong { font-size: 18px; font-weight: 500; color: #000; margin-bottom: 9px; }
.place span { color: #5b5b5b; margin-bottom: 27px; }
.route { display: flex; flex-direction: column; align-items: center; gap: 5px; padding-top: 3px; white-space: nowrap; }

.scrollbar { flex: none; width: 14px; background: #fcfcfc; display: flex; flex-direction: column; align-items: flex-end; padding: 9px 0; }
.up, .down { border: 5px solid transparent; border-top-width: 0; border-bottom: 6px solid #8b8b8b; }
.down { border-bottom-width: 0; border-top: 6px solid #8b8b8b; margin-top: auto; }
.thumb { width: 10px; height: 125px; margin-top: 578px; border-radius: 5px; background: #8b8b8b; }

.taskbar { flex: none; height: 40px; display: flex; background: #dae8f0; border-right: 1px solid #9baab2; color: #111; }
.start { width: 42px; padding-left: 10px; display: flex; align-items: center; }
.search { width: 288px; height: 40px; border: 1px solid #c6c6c6; background: #fff; display: flex; align-items: center; gap: 10px; padding-left: 11px; }
.search svg { fill: none; stroke: #222; stroke-width: 1; }
.search input { flex: 1; min-width: 0; border: 0; padding: 0; background: none; font: 400 15px/20px "Open Sans", sans-serif; }
.search input::placeholder { color: #333; opacity: 1; }
.view { width: 51px; padding-left: 16px; }
.apps { display: flex; gap: 1px; }
.apps button { position: relative; width: 48px; height: 40px; display: flex; align-items: center; justify-content: center; }
.apps .active { background: #f2f7fa; }
.apps .open::after { content: ""; position: absolute; bottom: 0; left: 4px; right: 4px; height: 2px; background: #0078d7; }
.apps .active::after { left: 0; right: 0; }
.apps .multi::after { border-right: 8px solid #62a9e3; }
.badge { position: absolute; left: 29px; top: 19px; width: 16px; height: 16px; border: 1px solid #8b9296; border-radius: 50%; background: #d3d9da; font-size: 12px; line-height: 14px; text-align: center; }
.tray { margin-left: auto; display: flex; align-items: center; gap: 6px; padding-right: 8px; font-size: 12px; }
.tray svg { fill: none; stroke: #111; stroke-width: 1; }
.weather { position: relative; display: flex; align-items: center; gap: 6px; margin-right: 18px; font-size: 14px; }
.tray .weather svg { stroke: none; }
.alert { position: absolute; left: 16px; top: 1px; font-size: 10px; line-height: 10px; color: #fff; }
.lang { margin-left: 3px; }
.clock { display: flex; flex-direction: column; align-items: center; line-height: 18px; margin: 0 10px 0 4px; }
.notes { position: relative; width: 26px; }
.notes .badge { left: 9px; top: 8px; }
</style>
